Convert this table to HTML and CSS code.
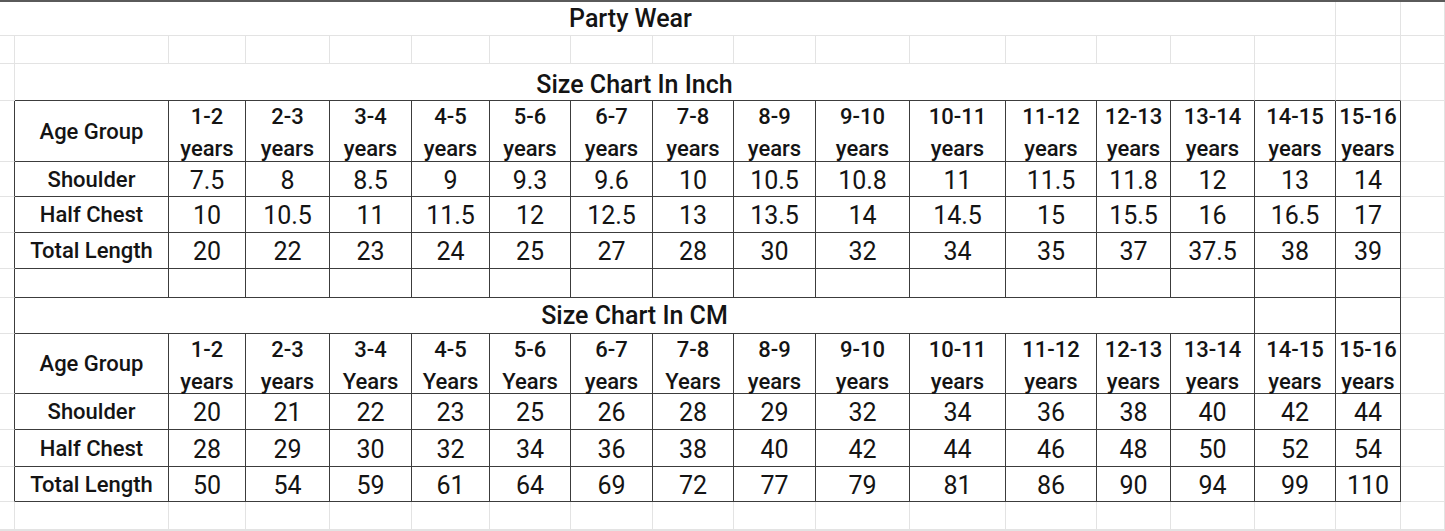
FILE: index.html
```html
<!DOCTYPE html>
<html lang="en">
<head>
<meta charset="utf-8">
<title>Party Wear Size Chart</title>
<link rel="stylesheet" href="styles.css">
</head>
<body>
<div class="sheet">
  <!-- Row 1 -->
  <div class="c ttl span16 scrolled">Party Wear</div>
  <div class="c"></div><div class="c"></div>

  <!-- Row 2 -->
  <div class="c"></div><div class="c"></div><div class="c"></div><div class="c"></div><div class="c"></div><div class="c"></div>
  <div class="c"></div><div class="c"></div><div class="c"></div><div class="c"></div><div class="c"></div><div class="c"></div>
  <div class="c"></div><div class="c"></div><div class="c"></div><div class="c"></div><div class="c"></div><div class="c"></div>

  <!-- Row 3 -->
  <div class="c"></div>
  <div class="c ttl sub u span14">Size Chart In Inch</div>
  <div class="c u"></div><div class="c u"></div><div class="c"></div>

  <!-- Row 4: header (inch) -->
  <div class="c e"></div>
  <div class="c d lbl">Age Group</div>
  <div class="c d hd">1-2<br>years</div>
  <div class="c d hd">2-3<br>years</div>
  <div class="c d hd">3-4<br>years</div>
  <div class="c d hd">4-5<br>years</div>
  <div class="c d hd">5-6<br>years</div>
  <div class="c d hd">6-7<br>years</div>
  <div class="c d hd">7-8<br>years</div>
  <div class="c d hd">8-9<br>years</div>
  <div class="c d hd">9-10<br>years</div>
  <div class="c d hd">10-11<br>years</div>
  <div class="c d hd">11-12<br>years</div>
  <div class="c d hd">12-13<br>years</div>
  <div class="c d hd">13-14<br>years</div>
  <div class="c d hd">14-15<br>years</div>
  <div class="c d hd">15-16<br>years</div>
  <div class="c"></div>

  <!-- Row 5 -->
  <div class="c e"></div>
  <div class="c d lbl">Shoulder</div>
  <div class="c d num">7.5</div><div class="c d num">8</div><div class="c d num">8.5</div><div class="c d num">9</div>
  <div class="c d num">9.3</div><div class="c d num">9.6</div><div class="c d num">10</div><div class="c d num">10.5</div>
  <div class="c d num">10.8</div><div class="c d num">11</div><div class="c d num">11.5</div><div class="c d num">11.8</div>
  <div class="c d num">12</div><div class="c d num">13</div><div class="c d num">14</div>
  <div class="c"></div>

  <!-- Row 6 -->
  <div class="c e"></div>
  <div class="c d lbl">Half Chest</div>
  <div class="c d num">10</div><div class="c d num">10.5</div><div class="c d num">11</div><div class="c d num">11.5</div>
  <div class="c d num">12</div><div class="c d num">12.5</div><div class="c d num">13</div><div class="c d num">13.5</div>
  <div class="c d num">14</div><div class="c d num">14.5</div><div class="c d num">15</div><div class="c d num">15.5</div>
  <div class="c d num">16</div><div class="c d num">16.5</div><div class="c d num">17</div>
  <div class="c"></div>

  <!-- Row 7 -->
  <div class="c e"></div>
  <div class="c d lbl">Total Length</div>
  <div class="c d num">20</div><div class="c d num">22</div><div class="c d num">23</div><div class="c d num">24</div>
  <div class="c d num">25</div><div class="c d num">27</div><div class="c d num">28</div><div class="c d num">30</div>
  <div class="c d num">32</div><div class="c d num">34</div><div class="c d num">35</div><div class="c d num">37</div>
  <div class="c d num">37.5</div><div class="c d num">38</div><div class="c d num">39</div>
  <div class="c"></div>

  <!-- Row 8: blank bordered -->
  <div class="c e"></div>
  <div class="c d"></div><div class="c d"></div><div class="c d"></div><div class="c d"></div>
  <div class="c d"></div><div class="c d"></div><div class="c d"></div><div class="c d"></div>
  <div class="c d"></div><div class="c d"></div><div class="c d"></div><div class="c d"></div>
  <div class="c d"></div><div class="c d"></div><div class="c d"></div><div class="c d"></div>
  <div class="c"></div>

  <!-- Row 9 -->
  <div class="c e"></div>
  <div class="c d ttl span14">Size Chart In CM</div>
  <div class="c d"></div><div class="c d"></div>
  <div class="c"></div>

  <!-- Row 10: header (cm) -->
  <div class="c e"></div>
  <div class="c d lbl">Age Group</div>
  <div class="c d hd">1-2<br>years</div>
  <div class="c d hd">2-3<br>years</div>
  <div class="c d hd">3-4<br>Years</div>
  <div class="c d hd">4-5<br>Years</div>
  <div class="c d hd">5-6<br>Years</div>
  <div class="c d hd">6-7<br>years</div>
  <div class="c d hd">7-8<br>Years</div>
  <div class="c d hd">8-9<br>years</div>
  <div class="c d hd">9-10<br>years</div>
  <div class="c d hd">10-11<br>years</div>
  <div class="c d hd">11-12<br>years</div>
  <div class="c d hd">12-13<br>years</div>
  <div class="c d hd">13-14<br>years</div>
  <div class="c d hd">14-15<br>years</div>
  <div class="c d hd">15-16<br>years</div>
  <div class="c"></div>

  <!-- Row 11 -->
  <div class="c e"></div>
  <div class="c d lbl">Shoulder</div>
  <div class="c d num">20</div><div class="c d num">21</div><div class="c d num">22</div><div class="c d num">23</div>
  <div class="c d num">25</div><div class="c d num">26</div><div class="c d num">28</div><div class="c d num">29</div>
  <div class="c d num">32</div><div class="c d num">34</div><div class="c d num">36</div><div class="c d num">38</div>
  <div class="c d num">40</div><div class="c d num">42</div><div class="c d num">44</div>
  <div class="c"></div>

  <!-- Row 12 -->
  <div class="c e"></div>
  <div class="c d lbl">Half Chest</div>
  <div class="c d num">28</div><div class="c d num">29</div><div class="c d num">30</div><div class="c d num">32</div>
  <div class="c d num">34</div><div class="c d num">36</div><div class="c d num">38</div><div class="c d num">40</div>
  <div class="c d num">42</div><div class="c d num">44</div><div class="c d num">46</div><div class="c d num">48</div>
  <div class="c d num">50</div><div class="c d num">52</div><div class="c d num">54</div>
  <div class="c"></div>

  <!-- Row 13 -->
  <div class="c e"></div>
  <div class="c d lbl">Total Length</div>
  <div class="c d num">50</div><div class="c d num">54</div><div class="c d num">59</div><div class="c d num">61</div>
  <div class="c d num">64</div><div class="c d num">69</div><div class="c d num">72</div><div class="c d num">77</div>
  <div class="c d num">79</div><div class="c d num">81</div><div class="c d num">86</div><div class="c d num">90</div>
  <div class="c d num">94</div><div class="c d num">99</div><div class="c d num">110</div>
  <div class="c"></div>

  <!-- Row 14 -->
  <div class="c"></div><div class="c"></div><div class="c"></div><div class="c"></div><div class="c"></div><div class="c"></div>
  <div class="c"></div><div class="c"></div><div class="c"></div><div class="c"></div><div class="c"></div><div class="c"></div>
  <div class="c"></div><div class="c"></div><div class="c"></div><div class="c"></div><div class="c"></div><div class="c"></div>

  <!-- Row 15 -->
  <div class="c"></div><div class="c"></div><div class="c"></div><div class="c"></div><div class="c"></div><div class="c"></div>
  <div class="c"></div><div class="c"></div><div class="c"></div><div class="c"></div><div class="c"></div><div class="c"></div>
  <div class="c"></div><div class="c"></div><div class="c"></div><div class="c"></div><div class="c"></div><div class="c"></div>
</div>
</body>
</html>
```

FILE: styles.css
```css
* {
  box-sizing: border-box;
}

html, body {
  margin: 0;
  padding: 0;
  background: #ffffff;
  overflow: hidden;
}

body {
  width: 1445px;
  height: 531px;
  font-family: Roboto, "Liberation Sans", Arial, sans-serif;
  color: #141414;
}

.sheet {
  display: grid;
  width: 1445px;
  height: 531px;
  border-top: 2px solid #5a5a5a;
  grid-template-columns: 15px 154px 77px 84px 82px 78px 81px 82px 81px 82px 94px 96px 91px 74px 84px 81px 65px 1fr;
  grid-template-rows: 34px 28px 37px 61px 35px 36px 36px 29px 36px 60px 36px 37px 35px 28px 1fr;
  overflow: hidden;
}

.c {
  display: flex;
  align-items: center;
  justify-content: center;
  white-space: nowrap;
  border-right: 1px solid #e3e3e3;
  border-bottom: 1px solid #e3e3e3;
  min-width: 0;
  min-height: 0;
}

/* dark bordered table cell */
.d {
  border-right-color: #3c3c3c;
  border-bottom-color: #3c3c3c;
}

/* left edge of the table, drawn by the cell before it */
.e {
  border-right-color: #3c3c3c;
}

/* top edge of the table, drawn by the cell above it */
.u {
  border-bottom-color: #3c3c3c;
}

.span16 {
  grid-column: span 16;
}

.span14 {
  grid-column: span 14;
}

/* the first column is scrolled partly out of view, so the merged title centres further left */
.scrolled {
  padding-right: 74px;
}

.ttl {
  font-size: 25px;
  font-weight: 500;
}

.sub {
  padding-top: 5px;
}

.lbl {
  font-size: 22px;
  font-weight: 500;
}

.num {
  font-size: 25px;
  font-weight: 400;
  padding-top: 2px;
}

.hd {
  font-size: 22px;
  font-weight: 500;
  line-height: 32px;
  text-align: center;
  align-items: flex-start;
}
```
